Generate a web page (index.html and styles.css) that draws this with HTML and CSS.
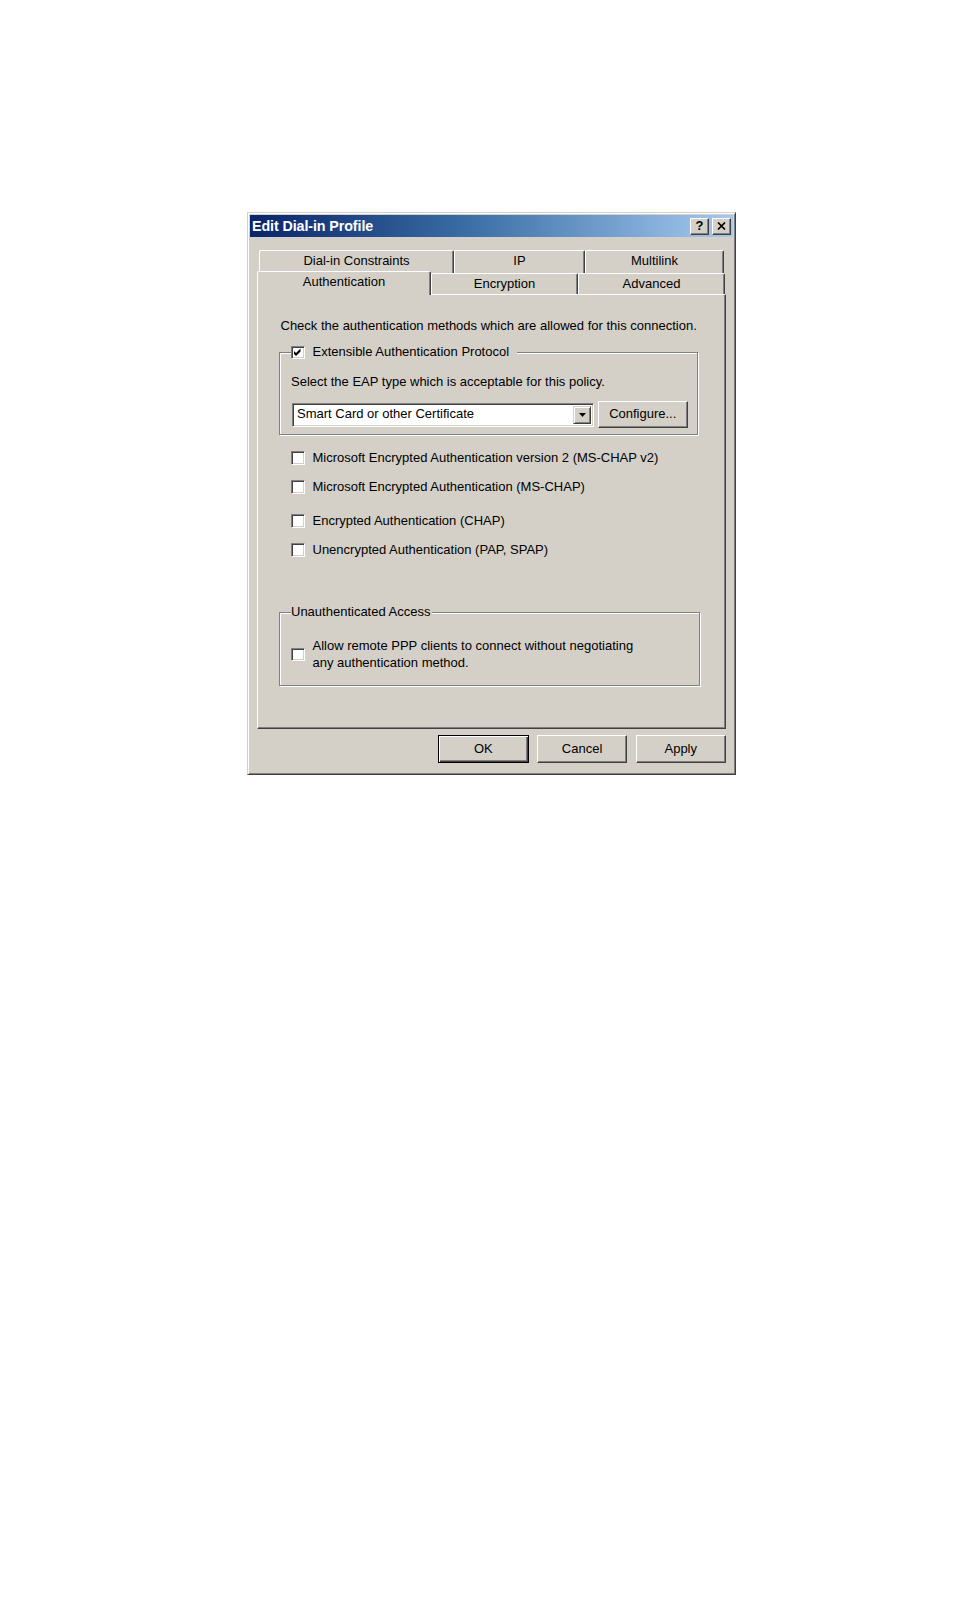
FILE: index.html
```html
<!DOCTYPE html>
<html>
<head>
<meta charset="utf-8">
<title>Edit Dial-in Profile</title>
<link rel="stylesheet" href="styles.css">
</head>
<body>
<div class="dialog">
  <div class="titlebar">
    <span class="title">Edit Dial-in Profile</span>
    <span class="tbtn help">?</span>
    <span class="tbtn close"><svg width="9" height="8" viewBox="0 0 9 8"><path d="M1 0.5 L8 7.5 M8 0.5 L1 7.5" stroke="#000" stroke-width="1.7" fill="none"/></svg></span>
  </div>
  <div class="content">
    <div class="tabs">
      <div class="tabrow back">
        <div class="tab w1">Dial-in Constraints</div>
        <div class="tab w2">IP</div>
        <div class="tab w3">Multilink</div>
      </div>
      <div class="tabrow front">
        <div class="tab sel w4">Authentication</div>
        <div class="tab w5">Encryption</div>
        <div class="tab w5">Advanced</div>
      </div>
    </div>
    <div class="panel">
      <p class="intro">Check the authentication methods which are allowed for this connection.</p>
      <fieldset class="group eap">
        <legend class="legend-check"><span class="cb checked"><svg width="9" height="9" viewBox="0 0 9 9"><path d="M1 3 L3 5 L7.5 0.5 L7.5 3.5 L3 8 L1 6 Z" fill="#000"/></svg></span><span>Extensible Authentication Protocol</span></legend>
        <p class="select-text">Select the EAP type which is acceptable for this policy.</p>
        <div class="combo-row">
          <div class="combo">
            <span class="combo-text">Smart Card or other Certificate</span>
            <span class="drop"><svg width="7" height="4" viewBox="0 0 7 4"><path d="M0 0 H7 L3.5 4 Z" fill="#000"/></svg></span>
          </div>
          <div class="btn configure">Configure...</div>
        </div>
      </fieldset>
      <div class="checks">
        <div class="check-row r1"><span class="cb"></span><span>Microsoft Encrypted Authentication version 2 (MS-CHAP v2)</span></div>
        <div class="check-row r2"><span class="cb"></span><span>Microsoft Encrypted Authentication (MS-CHAP)</span></div>
        <div class="check-row r3"><span class="cb"></span><span>Encrypted Authentication (CHAP)</span></div>
        <div class="check-row r4"><span class="cb"></span><span>Unencrypted Authentication (PAP, SPAP)</span></div>
      </div>
      <fieldset class="group unauth">
        <legend class="legend-text">Unauthenticated Access</legend>
        <div class="check-row multi"><span class="cb"></span><span>Allow remote PPP clients to connect without negotiating<br>any authentication method.</span></div>
      </fieldset>
    </div>
    <div class="buttons">
      <div class="btn default">OK</div>
      <div class="btn">Cancel</div>
      <div class="btn">Apply</div>
    </div>
  </div>
</div>
</body>
</html>
```

FILE: styles.css
```css
* { box-sizing: border-box; }

body {
  margin: 0;
  background: #ffffff;
  font-family: "Liberation Sans", Arial, sans-serif;
  font-size: 13px;
  line-height: 16.5px;
  color: #000;
}

p { margin: 0; }

.dialog {
  margin: 212px 0 0 247px;
  width: 489px;
  height: 563px;
  background: #d4d0c8;
  border: 1px solid;
  border-color: #d4d0c8 #404040 #404040 #d4d0c8;
  box-shadow: inset 1px 1px #ffffff, inset -1px -1px #808080;
  padding: 2px;
  display: flex;
  flex-direction: column;
}

.titlebar {
  height: 22px;
  background: linear-gradient(to right, #0a246a 0%, #3a6ea5 45%, #a6caf0 100%);
  display: flex;
  align-items: center;
  padding: 0 2px 0 2px;
}

.title {
  flex: 1;
  color: #fff;
  font-weight: bold;
  font-size: 14.3px;
  letter-spacing: -0.1px;
}

.tbtn {
  width: 19px;
  height: 17px;
  background: #d4d0c8;
  border: 1px solid;
  border-color: #ffffff #404040 #404040 #ffffff;
  box-shadow: inset -1px -1px #808080;
  display: flex;
  align-items: center;
  justify-content: center;
  font-weight: bold;
  font-size: 13px;
  line-height: 14px;
}

.tbtn.close { margin-left: 3px; width: 19px; }

.content {
  padding: 12.5px 7px 0 7px;
  display: flex;
  flex-direction: column;
}

.tabrow { display: flex; }

.tabrow.back {
  height: 23.5px;
  padding: 0 2px;
}

.tab {
  border-top: 1px solid #ffffff;
  border-left: 1px solid #ffffff;
  border-right: 1px solid #404040;
  box-shadow: inset -1px 0 #808080;
  border-radius: 2px 2px 0 0;
  display: flex;
  justify-content: center;
  background: #d4d0c8;
}

.back .tab {
  height: 23.5px;
  padding-top: 2px;
}

.tabrow.front {
  height: 21px;
  align-items: flex-end;
}

.front .tab {
  height: 21px;
  padding-top: 2px;
}

.front .tab.sel {
  height: 24px;
  margin-bottom: -1px;
  position: relative;
  z-index: 1;
  padding-top: 2px;
}

.w1 { width: 195px; }
.w2 { width: 131px; }
.w3 { width: 139px; }
.w4 { width: 174px; }
.w5 { width: 147px; }

.panel {
  height: 435px;
  border: 1px solid;
  border-color: #ffffff #404040 #404040 #ffffff;
  box-shadow: inset -1px -1px #808080;
  padding: 23px 0 0 20.5px;
}

.intro { padding-left: 2px; }

.group {
  margin: 0;
  border: 1px solid #808080;
  box-shadow: inset 1px 1px #ffffff, 1px 1px #ffffff;
  padding: 0;
}

.group legend {
  background: #d4d0c8;
  line-height: 16.5px;
}

.eap {
  width: 419px;
  margin-top: 9.5px;
  padding: 0 0 6px 11.5px;
}

.legend-check {
  display: flex;
  align-items: center;
  margin-left: 0;
  padding: 0 8px 0 0;
}

.legend-check .cb { margin-right: 8px; }

.select-text {
  margin-top: 13.5px;
}

.combo-row {
  margin-top: 10.5px;
  display: flex;
  align-items: center;
  padding-left: 1px;
}

.combo {
  width: 302px;
  height: 24px;
  background: #ffffff;
  border: 1px solid;
  border-color: #808080 #ffffff #ffffff #808080;
  box-shadow: inset 1px 1px #404040, inset -1px -1px #d4d0c8;
  display: flex;
  align-items: center;
  padding: 2px;
}

.combo-text {
  flex: 1;
  padding-left: 2px;
}

.drop {
  width: 18px;
  height: 18px;
  background: #d4d0c8;
  border: 1px solid;
  border-color: #d4d0c8 #404040 #404040 #d4d0c8;
  box-shadow: inset 1px 1px #ffffff, inset -1px -1px #808080;
  display: flex;
  align-items: center;
  justify-content: center;
}

.btn {
  width: 90.5px;
  height: 28px;
  background: #d4d0c8;
  border: 1px solid;
  border-color: #ffffff #404040 #404040 #ffffff;
  box-shadow: inset -1px -1px #808080;
  display: flex;
  align-items: center;
  justify-content: center;
}

.btn.configure {
  width: 89.5px;
  height: 27px;
  margin-left: 4px;
}

.btn.default {
  border-color: #000;
  box-shadow: inset 1px 1px #ffffff, inset -1px -1px #404040, inset -2px -2px #808080;
}

.cb {
  width: 13.5px;
  height: 13.5px;
  flex: none;
  background: #ffffff;
  border: 1px solid;
  border-color: #808080 #ffffff #ffffff #808080;
  box-shadow: inset 1px 1px #404040, inset -1px -1px #d4d0c8;
  display: flex;
  align-items: center;
  justify-content: center;
}

.checks { padding-left: 12.5px; }

.check-row {
  display: flex;
  align-items: center;
  gap: 8px;
}

.r1 { margin-top: 14.5px; }
.r2 { margin-top: 12.5px; }
.r3 { margin-top: 17.5px; }
.r4 { margin-top: 12.5px; }

.unauth {
  width: 421.5px;
  margin-top: 46px;
  padding: 0 0 13.5px 11.5px;
}

.legend-text {
  margin-left: 0;
  padding: 0 2px 0 0;
}

.check-row.multi {
  margin-top: 17.5px;
}

.buttons {
  margin-top: 6px;
  display: flex;
  justify-content: flex-end;
  gap: 8.2px;
}
```
